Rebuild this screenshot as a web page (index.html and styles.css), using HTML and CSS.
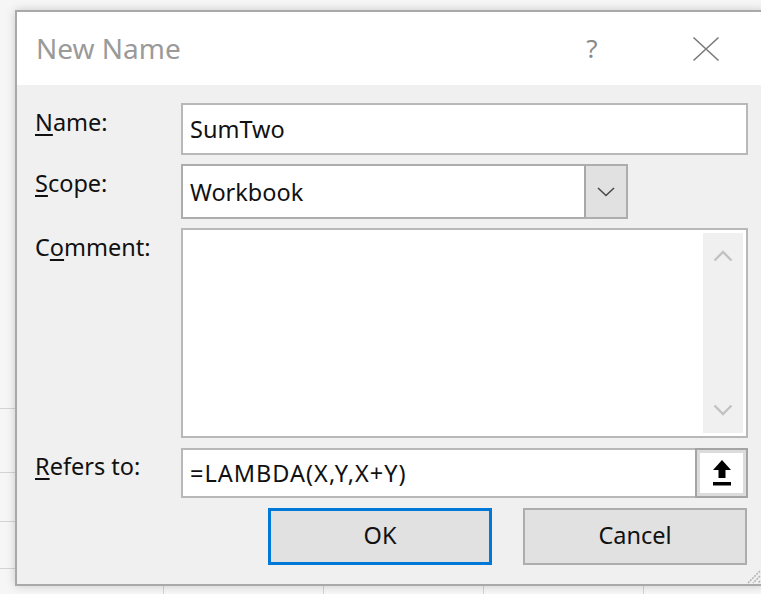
FILE: index.html
```html
<!DOCTYPE html>
<html lang="en">
<head>
<meta charset="utf-8">
<title>New Name</title>
<link rel="stylesheet" href="styles.css">
</head>
<body>
<div class="dialog">
  <div class="titlebar">
    <span class="title">New Name</span>
    <span class="help">?</span>
    <svg class="close" width="28" height="26" viewBox="0 0 28 26"><path d="M1.5 1.5L26.5 24.5M26.5 1.5L1.5 24.5"/></svg>
  </div>
  <div class="content">
    <div class="form">
      <label class="lbl"><u>N</u>ame:</label>
      <div class="field"><span class="value">SumTwo</span></div>

      <label class="lbl"><u>S</u>cope:</label>
      <div class="combo">
        <span class="value">Workbook</span>
        <span class="combo-btn">
          <svg width="18" height="10" viewBox="0 0 18 10"><path d="M1 1L9 8.5L17 1"/></svg>
        </span>
      </div>

      <label class="lbl">C<u>o</u>mment:</label>
      <div class="memo">
        <div class="memo-text"></div>
        <div class="scrollbar">
          <svg class="arrow" width="20" height="12" viewBox="0 0 20 12"><path d="M1.5 10.5L10 2L18.5 10.5"/></svg>
          <svg class="arrow" width="20" height="12" viewBox="0 0 20 12"><path d="M1.5 1.5L10 10L18.5 1.5"/></svg>
        </div>
      </div>

      <label class="lbl"><u>R</u>efers to:</label>
      <div class="field refers">
        <span class="value formula">=LAMBDA(X,Y,X+Y)</span>
        <span class="collapse">
          <span class="collapse-face">
            <svg width="18" height="26" viewBox="0 0 18 26"><path d="M9 0L18 10H12.5V18H5.5V10H0Z"/><rect x="0" y="22" width="18" height="3.5"/></svg>
          </span>
        </span>
      </div>
    </div>

    <div class="buttons">
      <button class="btn btn-default">OK</button>
      <button class="btn">Cancel</button>
    </div>
  </div>
  <svg class="grip" width="18" height="18" viewBox="0 0 18 18"><path d="M17 5L5 17M17 10L10 17M17 15L15 17"/></svg>
</div>
</body>
</html>
```

FILE: styles.css
```css
html, body {
  margin: 0;
  padding: 0;
}

body {
  width: 761px;
  height: 594px;
  overflow: hidden;
  font-family: "Noto Sans", "Open Sans", sans-serif;
  background-color: #f6f6f6;
  /* sheet gridlines showing around the dialog */
  background-image:
    linear-gradient(#d4d4d4, #d4d4d4),
    linear-gradient(#d4d4d4, #d4d4d4),
    linear-gradient(#d4d4d4, #d4d4d4),
    linear-gradient(#d4d4d4, #d4d4d4),
    linear-gradient(#d4d4d4, #d4d4d4),
    linear-gradient(#d4d4d4, #d4d4d4),
    linear-gradient(#d4d4d4, #d4d4d4),
    linear-gradient(#d4d4d4, #d4d4d4);
  background-size:
    15px 1px, 15px 1px, 15px 1px, 15px 1px,
    1px 12px, 1px 12px, 1px 12px, 1px 12px;
  background-position:
    0 408px, 0 472px, 0 521px, 0 568px,
    163px 584px, 323px 584px, 483px 584px, 643px 584px;
  background-repeat: no-repeat;
}

.dialog {
  position: relative;
  box-sizing: border-box;
  width: 750px;
  height: 576px;
  margin: 10px 0 0 15px;
  border: 2px solid #a9a9a9;
  background: #f0f0f0;
  box-shadow: 0 0 9px rgba(0, 0, 0, 0.18);
  display: flex;
  flex-direction: column;
}

/* title bar */
.titlebar {
  height: 73px;
  flex: none;
  background: #fff;
  display: flex;
  align-items: center;
  padding: 0 27px 0 19px;
}

.title {
  flex: 1;
  font-size: 28px;
  color: #9a9a9a;
  padding-bottom: 2px;
}

.help {
  width: 40px;
  text-align: center;
  font-size: 26px;
  color: #8a8a8a;
  margin-right: 64px;
  padding-bottom: 2px;
}

.close {
  margin: 0 16px;
  fill: none;
  stroke: #7a7a7a;
  stroke-width: 1.6;
}

/* form body */
.content {
  flex: 1;
  padding: 18px 15px 0 18px;
  display: flex;
  flex-direction: column;
}

.form {
  display: grid;
  grid-template-columns: 146px 567px;
  grid-template-rows: 52px 55px 210px 50px;
  row-gap: 9px;
}

.lbl {
  font-size: 23.5px;
  color: #111;
  line-height: 30px;
  padding-top: 4px;
}

.lbl u {
  text-decoration-thickness: 2px;
  text-underline-offset: 3px;
}

.field,
.combo,
.memo {
  box-sizing: border-box;
  border: 2px solid #b8b8b8;
  background: #fff;
  display: flex;
  align-items: center;
}

.value {
  font-size: 23.5px;
  color: #111;
  padding-left: 7px;
  flex: 1;
}

.formula {
  letter-spacing: 1px;
}

.combo {
  border-color: #adadad;
  width: 447px;
}

.combo-btn {
  align-self: stretch;
  width: 42px;
  box-sizing: border-box;
  border-left: 2px solid #a8a8a8;
  background: #e1e1e1;
  display: flex;
  align-items: center;
  justify-content: center;
}

.combo-btn svg {
  fill: none;
  stroke: #4a4a4a;
  stroke-width: 1.6;
}

.memo {
  align-items: stretch;
  padding: 3px 3px 3px 0;
}

.memo-text {
  flex: 1;
}

.scrollbar {
  width: 40px;
  background: #f0f0f0;
  display: flex;
  flex-direction: column;
  align-items: center;
  justify-content: space-between;
  padding: 17px 0 17px;
}

.arrow {
  fill: none;
  stroke: #c2c2c2;
  stroke-width: 2.4;
}

.refers {
  margin-top: 1px;
  height: 50px;
}

.collapse {
  align-self: stretch;
  width: 53px;
  margin: -2px -2px -2px 0;
  box-sizing: border-box;
  border: 2px solid #a4a4a4;
  background: #dcdcdc;
  padding: 3px;
  display: flex;
}

.collapse-face {
  flex: 1;
  background: #fff;
  display: flex;
  align-items: center;
  justify-content: center;
}

.collapse-face svg {
  fill: #000;
}

/* dialog buttons */
.buttons {
  display: flex;
  justify-content: flex-end;
  gap: 31px;
  margin-top: 11px;
  padding-right: 1px;
}

.btn {
  width: 224px;
  height: 57px;
  box-sizing: border-box;
  border: 2px solid #adadad;
  background: #e1e1e1;
  font-family: inherit;
  font-size: 23.5px;
  color: #111;
  padding: 0 0 3px;
}

.btn-default {
  border: 3px solid #0078d7;
}

.grip {
  position: absolute;
  right: 2px;
  bottom: 0;
  fill: none;
  stroke: #b5b5b5;
  stroke-width: 1.6;
  stroke-dasharray: 2 1;
}
```
